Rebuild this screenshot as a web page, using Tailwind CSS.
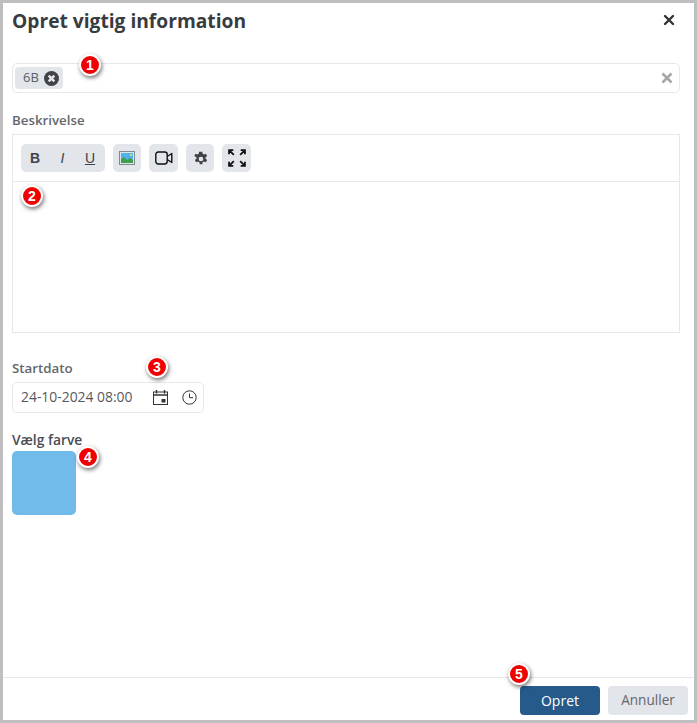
<!DOCTYPE html>
<html lang="da">
<head>
<meta charset="UTF-8">
<title>Opret vigtig information</title>
<script src="https://cdn.jsdelivr.net/npm/@tailwindcss/browser@4"></script>
</head>
<body class="bg-white font-['Open_Sans',sans-serif] text-[#3a3f44]">
<div class="relative w-[697px] h-[723px] border-[3px] border-[#bfbfbf] flex flex-col overflow-hidden">

  <div class="flex-1 pl-[9px] pr-[14px]">
    <!-- header -->
    <div class="flex justify-between items-start h-[38px]">
      <h1 class="text-[19.2px] font-bold leading-[36px] text-[#383c40]">Opret vigtig information</h1>
      <svg class="w-[12px] h-[12px] mr-[5px] mt-[11px]" viewBox="0 0 12 12"><path d="M2 2l8 8M10 2l-8 8" stroke="#333" stroke-width="2.4" stroke-linecap="round"/></svg>
    </div>

    <!-- klasser -->
    <div class="mt-[22px] h-[30px] rounded-[5px] border border-[#e6e8ea] flex items-center justify-between pl-[2px] pr-[6px]">
      <div class="h-[22px] w-[48px] bg-[#e2e5e9] rounded-[4px] flex items-center pl-[8px] gap-[5px]">
        <span class="text-[13px] text-[#5b6066]">6B</span>
        <svg class="w-[15px] h-[15px]" viewBox="0 0 16 16"><circle cx="8" cy="8" r="8" fill="#3f4246"/><path d="M5 5l6 6M11 5l-6 6" stroke="#e2e5e9" stroke-width="2.8"/></svg>
      </div>
      <svg class="w-[12px] h-[12px]" viewBox="0 0 12 12"><path d="M1.5 1.5l9 9M10.5 1.5l-9 9" stroke="#a6a6a6" stroke-width="2.6"/></svg>
    </div>

    <!-- beskrivelse -->
    <div class="mt-[18px] text-[13.3px] font-semibold text-[#63676b] leading-[18px]">Beskrivelse</div>
    <div class="mt-[5px] h-[199px] border border-[#e6e8ea] flex flex-col">
      <div class="h-[47px] border-b border-[#e6e8ea] flex items-center gap-[8px] pl-[8px]">
        <div class="w-[84px] h-[28px] bg-[#e2e5e9] rounded-[5px] flex items-center justify-between pl-[8px] pr-[9px] font-['Liberation_Sans',sans-serif] text-[14px] text-[#3f4246]">
          <span class="font-bold w-[12px] text-center">B</span>
          <span class="italic w-[12px] text-center">I</span>
          <span class="underline w-[12px] text-center">U</span>
        </div>
        <div class="w-[28px] h-[28px] bg-[#e2e5e9] rounded-[5px] flex items-center justify-center">
          <svg class="w-[16px] h-[14px]" viewBox="0 0 16 14"><rect x="0.5" y="0.5" width="15" height="13" fill="#dfe6ea" stroke="#7f8a94"/><rect x="2" y="2" width="12" height="10" fill="#4fb3e8"/><path d="M2 12V8l3-2 3 3 3-2 3 2v3z" fill="#3f9e4a"/><circle cx="12" cy="4" r="1" fill="#f5e663"/></svg>
        </div>
        <div class="w-[29px] h-[28px] bg-[#e2e5e9] rounded-[5px] flex items-center justify-center">
          <svg class="w-[18px] h-[14px]" viewBox="0 0 18 14" fill="none" stroke="#111" stroke-width="1.4"><rect x="0.8" y="1" width="11.4" height="12" rx="2.4"/><path d="M12.2 5.5l4.6-3v9l-4.6-3" stroke-linejoin="round"/></svg>
        </div>
        <div class="w-[28px] h-[28px] bg-[#e2e5e9] rounded-[5px] flex items-center justify-center">
          <svg class="w-[16px] h-[16px] ml-[1px] mt-[1px]" viewBox="0 0 24 24" fill="#3f4246"><path fill-rule="evenodd" d="M13.9 1l.5 3a8.5 8.5 0 0 1 2 1.2l2.9-1.1 1.9 3.3-2.4 1.9a8.5 8.5 0 0 1 0 2.4l2.4 1.9-1.9 3.3-2.9-1.1a8.5 8.5 0 0 1-2 1.2l-.5 3h-3.8l-.5-3a8.5 8.5 0 0 1-2-1.2l-2.9 1.1-1.9-3.3 2.4-1.9a8.5 8.5 0 0 1 0-2.4L1.8 7.4l1.9-3.3 2.9 1.1a8.5 8.5 0 0 1 2-1.2l.5-3zM12 8.5a3.5 3.5 0 1 0 0 7 3.5 3.5 0 0 0 0-7z"/></svg>
        </div>
        <div class="w-[29px] h-[28px] bg-[#e2e5e9] rounded-[5px] flex items-center justify-center">
          <svg class="w-[18px] h-[18px]" viewBox="0 0 17 17" fill="none" stroke="#111" stroke-width="1.7"><path d="M1 5V1h4M1 1l4.5 4.5M12 1h4v4M16 1l-4.5 4.5M1 12v4h4M1 16l4.5-4.5M12 16h4v-4M16 16l-4.5-4.5"/></svg>
        </div>
      </div>
    </div>

    <!-- startdato -->
    <div class="mt-[26px] text-[13.3px] font-semibold text-[#63676b] leading-[18px]">Startdato</div>
    <div class="mt-[5px] w-[192px] h-[31px] rounded-[5px] border border-[#e6e8ea] flex items-center pl-[8px] pr-[6px]">
      <span class="text-[13.9px] text-[#55595e] flex-1">24-10-2024 08:00</span>
      <svg class="w-[15px] h-[15px] mr-[14px] -mt-[1px]" viewBox="0 0 15 15" fill="none" stroke="#333"><rect x="0.5" y="2" width="14" height="12.5"/><path d="M0.5 5h14M3.5 0v3.5M11.5 0v3.5" stroke-width="1.4"/><rect x="8.5" y="9" width="4" height="3.5" fill="#333" stroke="none"/></svg>
      <svg class="w-[15px] h-[15px]" viewBox="0 0 15 15" fill="none" stroke="#333"><circle cx="7.5" cy="7.5" r="6.7"/><path d="M7.5 3.5v4.2h3.5"/></svg>
    </div>

    <!-- farve -->
    <div class="mt-[16px] text-[13.8px] font-semibold text-[#4a4e52] leading-[22px]">Vælg farve</div>
    <div class="w-[64px] h-[64px] rounded-[5px] bg-[#70bbe9]"></div>
  </div>

  <!-- footer -->
  <div class="h-[43px] shrink-0 border-t border-[#e6e8ea] flex justify-end items-start gap-[8px] pt-[8px] pr-[6px]">
    <button class="w-[80px] h-[29px] rounded-[4px] bg-[#255a8a] text-white text-[14px]">Opret</button>
    <button class="w-[80px] h-[29px] rounded-[4px] bg-[#e2e5e9] text-[#63676b] text-[13.6px]">Annuller</button>
  </div>

  <!-- markeringer -->
  <div class="absolute left-[76px] top-[51px] w-[22px] h-[22px] rounded-full bg-[#f00000] border-2 border-white shadow-[1px_2px_4px_rgba(0,0,0,0.55)] flex items-center justify-center text-white text-[14px] font-bold font-['Liberation_Sans',sans-serif]">1</div>
  <div class="absolute left-[18px] top-[182px] w-[22px] h-[22px] rounded-full bg-[#f00000] border-2 border-white shadow-[1px_2px_4px_rgba(0,0,0,0.55)] flex items-center justify-center text-white text-[14px] font-bold font-['Liberation_Sans',sans-serif]">2</div>
  <div class="absolute left-[143px] top-[353px] w-[22px] h-[22px] rounded-full bg-[#f00000] border-2 border-white shadow-[1px_2px_4px_rgba(0,0,0,0.55)] flex items-center justify-center text-white text-[14px] font-bold font-['Liberation_Sans',sans-serif]">3</div>
  <div class="absolute left-[74px] top-[443px] w-[22px] h-[22px] rounded-full bg-[#f00000] border-2 border-white shadow-[1px_2px_4px_rgba(0,0,0,0.55)] flex items-center justify-center text-white text-[14px] font-bold font-['Liberation_Sans',sans-serif]">4</div>
  <div class="absolute left-[505px] top-[660px] w-[22px] h-[22px] rounded-full bg-[#f00000] border-2 border-white shadow-[1px_2px_4px_rgba(0,0,0,0.55)] flex items-center justify-center text-white text-[14px] font-bold font-['Liberation_Sans',sans-serif]">5</div>
</div>
</body>
</html>
